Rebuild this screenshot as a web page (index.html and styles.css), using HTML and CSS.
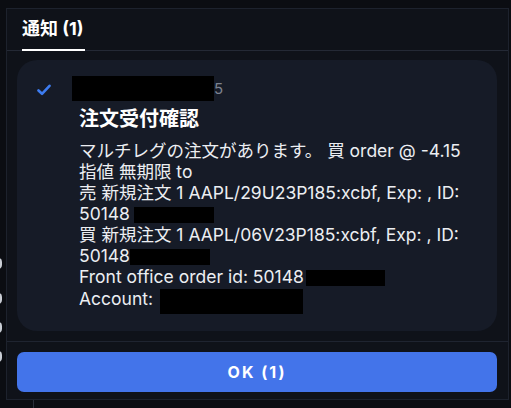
FILE: index.html
```html
<!DOCTYPE html>
<html lang="ja">
<head>
<meta charset="utf-8">
<title>通知</title>
<link rel="stylesheet" href="styles.css">
</head>
<body>
<div class="stage">
  <div class="backdrop">
    <span class="bg-ring g1"></span>
    <span class="bg-ring g2"></span>
    <span class="bg-ring g3"></span>
    <span class="bg-ring g4"></span>
    <span class="bg-line"></span>
  </div>
  <div class="dialog">
    <div class="tabs">
      <div class="tab active">通知 (1)</div>
    </div>
    <div class="content">
      <div class="card">
        <div class="icon">
          <svg width="14" height="12" viewBox="0 0 14 12"><path d="M1.5 6.5 L5 9.8 L12.5 1.8" fill="none" stroke="#3d7cf0" stroke-width="2.6" stroke-linecap="round" stroke-linejoin="round"/></svg>
        </div>
        <div class="msg">
          <div class="time"><span class="redact r-time"></span>5</div>
          <div class="title">注文受付確認</div>
          <div class="text">
            <div>マルチレグの注文があります。 買 order @ -4.15</div>
            <div>指値 無期限 to</div>
            <div>売 新規注文 1 AAPL/29U23P185:xcbf, Exp: , ID:</div>
            <div>50148<span class="redact r-id1"></span></div>
            <div>買 新規注文 1 AAPL/06V23P185:xcbf, Exp: , ID:</div>
            <div>50148<span class="redact r-id2"></span></div>
            <div>Front office order id: 50148<span class="redact r-id3"></span></div>
            <div>Account: <span class="redact r-acct"></span></div>
          </div>
        </div>
      </div>
    </div>
    <div class="footer">
      <button class="ok">OK (1)</button>
    </div>
  </div>
</div>
</body>
</html>
```
FILE: styles.css
```css
html, body {
  margin: 0;
  padding: 0;
  background: #000;
}
body {
  font-family: Inter, "Noto Sans CJK JP", sans-serif;
}
.stage {
  position: relative;
  width: 511px;
  height: 408px;
  overflow: hidden;
  background: #000;
}
.backdrop {
  position: absolute;
  inset: 0;
  background: #0b0d12;
}
.bg-ring {
  position: absolute;
  left: -6px;
  width: 8px;
  height: 11px;
  border: 2px solid #c9cdd4;
  border-radius: 4px;
  box-sizing: border-box;
}
.g1 { top: 258px; }
.g2 { top: 293px; }
.g3 { top: 322px; }
.g4 { top: 351px; }
.bg-line {
  position: absolute;
  left: 33px;
  top: 400px;
  width: 1px;
  height: 8px;
  background: #2a2f3a;
}
.dialog {
  position: absolute;
  left: 6px;
  top: 8px;
  width: 501px;
  height: 390px;
  border: 1px solid #1d222d;
  background: #0f1219;
  display: flex;
  flex-direction: column;
}
.tabs {
  height: 41px;
  border-bottom: 1px solid #242935;
  padding-left: 15px;
  display: flex;
  align-items: flex-end;
}
.tab {
  color: #ffffff;
  font-weight: 700;
  font-size: 18px;
  line-height: 20px;
  padding-bottom: 10px;
  border-bottom: 2px solid #ffffff;
  margin-bottom: -1px;
  width: 63px;
  white-space: nowrap;
}
.content {
  padding: 9px 11px 10px 10px;
}
.card {
  height: 271px;
  box-sizing: border-box;
  background: #161b27;
  border-radius: 20px;
  padding: 16px 0 0 20px;
  display: grid;
  grid-template-columns: 42px 1fr;
}
.icon {
  padding-top: 8px;
}
.icon svg {
  display: block;
}
.time {
  height: 25px;
  display: flex;
  align-items: center;
  color: #7d8390;
  font-size: 15px;
}
.redact {
  display: inline-block;
  background: #000;
  vertical-align: middle;
}
.r-time {
  width: 142px;
  height: 25px;
  margin-left: -7px;
}
.title {
  margin-top: 5px;
  color: #ffffff;
  font-weight: 700;
  font-size: 20px;
  line-height: 26px;
}
.text {
  margin-top: 8px;
  color: #eceef2;
  font-size: 17.5px;
  line-height: 21px;
}
.r-id1 { width: 80px; height: 16px; margin-left: 4px; }
.r-id2 { width: 80px; height: 16px; margin-left: 0; }
.r-id3 { width: 79px; height: 16px; margin-left: 2px; }
.r-acct { width: 143px; height: 25px; margin-top: 2px; margin-left: 2px; }
.footer {
  margin-top: auto;
  border-top: 1px solid #1f2430;
  padding: 10px 11px 7px 10px;
}
.ok {
  display: block;
  width: 100%;
  height: 40px;
  border: none;
  border-radius: 7px;
  background: #4374ea;
  color: #ffffff;
  font-family: Inter, "Noto Sans CJK JP", sans-serif;
  font-weight: 700;
  font-size: 16px;
  letter-spacing: 2px;
  padding: 0;
}
```
